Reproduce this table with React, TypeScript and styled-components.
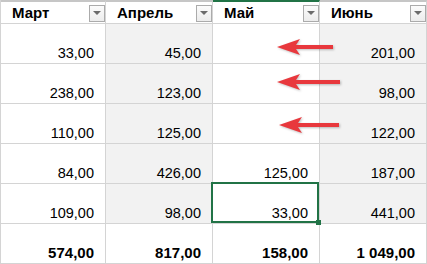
import styled, { createGlobalStyle } from "styled-components";

const GRID = "#d4d4d4";
const SHADE = "#f2f2f2";
const EXCEL_GREEN = "#217346";

const GlobalStyle = createGlobalStyle`
  html, body {
    margin: 0;
    padding: 0;
    background: #fff;
  }
  body {
    font-family: "Liberation Sans", Arial, sans-serif;
    color: #000;
  }
`

const Sheet = styled.div`
  position: relative;
  width: 427px;
  height: 264px;
  overflow: hidden;
`

const Table = styled.div`
  display: grid;
  grid-template-columns: 105px 107px 107px 107px;
  grid-template-rows: 24px repeat(6, 40px);
  border-left: 1px solid ${GRID};
`

const HeaderCell = styled.div<{ $active?: boolean }>`
  display: flex;
  align-items: center;
  justify-content: space-between;
  padding-left: 11px;
  border-top: 2px solid ${p => (p.$active ? EXCEL_GREEN : "#c6c6c6")};
  border-right: 1px solid ${GRID};
  border-bottom: 1px solid ${GRID};
  font-size: 15px;
  font-weight: bold;
  background: #fff;
`

const FilterButton = styled.span`
  display: flex;
  align-items: center;
  justify-content: center;
  width: 14px;
  height: 15px;
  border: 1px solid #ababab;
  background: linear-gradient(#fbfbfb, #ececec);
  margin-top: 1px;

  &::before {
    content: "";
    border-left: 4px solid transparent;
    border-right: 4px solid transparent;
    border-top: 4px solid #6b6b6b;
  }
`

const Cell = styled.div<{ $shaded?: boolean; $bold?: boolean; $selected?: boolean }>`
  position: relative;
  display: flex;
  align-items: flex-end;
  justify-content: flex-end;
  padding: 0 11px 2px 0;
  border-right: 1px solid ${GRID};
  border-bottom: 1px solid ${GRID};
  background: ${p => (p.$shaded ? SHADE : "#fff")};
  font-size: ${p => (p.$bold ? "15px" : "14.5px")};
  font-weight: ${p => (p.$bold ? "bold" : "normal")};
  line-height: 16px;

  ${p => p.$selected && `
    &::after {
      content: "";
      position: absolute;
      left: -2px;
      top: -2px;
      right: 0;
      bottom: 0;
      border: 2px solid ${EXCEL_GREEN};
      z-index: 1;
    }
    &::before {
      content: "";
      position: absolute;
      right: -2px;
      bottom: -2px;
      width: 5px;
      height: 5px;
      background: ${EXCEL_GREEN};
      z-index: 2;
    }
  `}
`

const Arrows = styled.svg`
  position: absolute;
  left: 0;
  top: 0;
  pointer-events: none;
  filter: drop-shadow(1px 1px 1px rgba(0, 0, 0, 0.25));
`

type Column = { title: string; shaded: boolean; values: string[]; total: string };

const columns: Column[] = [
  { title: "Март", shaded: false, values: ["33,00", "238,00", "110,00", "84,00", "109,00"], total: "574,00" },
  { title: "Апрель", shaded: true, values: ["45,00", "123,00", "125,00", "426,00", "98,00"], total: "817,00" },
  { title: "Май", shaded: false, values: ["", "", "", "125,00", "33,00"], total: "158,00" },
  { title: "Июнь", shaded: true, values: ["201,00", "98,00", "122,00", "187,00", "441,00"], total: "1 049,00" },
];

const ACTIVE_COL = 2;
const SELECTED_ROW = 4;

// left-pointing barbed arrow, tip at (x, y), tail at x + len
const arrowPath = (x: number, y: number, len: number) =>
  `M${x} ${y} L${x + 23} ${y - 8} L${x + 19} ${y - 2} L${x + len} ${y - 2} ` +
  `L${x + len} ${y + 2} L${x + 19} ${y + 2} L${x + 23} ${y + 8} Z`;

const arrows = [
  { x: 277, y: 47, len: 56 },
  { x: 277, y: 82, len: 63 },
  { x: 279, y: 125, len: 60 },
];

export const App: React.FC = () => {
  const rows = [0, 1, 2, 3, 4];

  return (
    <Sheet>
      <GlobalStyle />
      <Table>
        {columns.map((c, i) => (
          <HeaderCell key={c.title} $active={i === ACTIVE_COL}>
            {c.title}
            <FilterButton />
          </HeaderCell>
        ))}
        {rows.map(r =>
          columns.map((c, i) => (
            <Cell
              key={`${r}-${i}`}
              $shaded={c.shaded}
              $selected={i === ACTIVE_COL && r === SELECTED_ROW}
            >
              {c.values[r]}
            </Cell>
          ))
        )}
        {columns.map(c => (
          <Cell key={`total-${c.title}`} $bold>
            {c.total}
          </Cell>
        ))}
      </Table>
      <Arrows width="427" height="264" viewBox="0 0 427 264">
        {arrows.map(a => (
          <path key={a.y} d={arrowPath(a.x, a.y, a.len)} fill="#e8383d" />
        ))}
      </Arrows>
    </Sheet>
  );
}

export default App;
